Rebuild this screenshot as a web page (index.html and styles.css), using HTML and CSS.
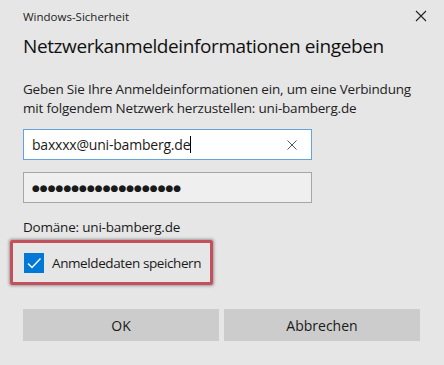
FILE: index.html
```html
<!DOCTYPE html>
<html lang="de">
<head>
    <meta charset="UTF-8">
    <title>Windows-Sicherheit</title>
    <link rel="stylesheet" href="styles.css">
</head>
<body>
    <div class="dialog">
        <div class="titlebar">
            <span class="caption">Windows-Sicherheit</span>
            <svg class="close" width="12" height="12" viewBox="0 0 12 12">
                <path d="M1 1 L11 11 M11 1 L1 11" stroke="#222" stroke-width="1.1" fill="none"/>
            </svg>
        </div>

        <h1>Netzwerkanmeldeinformationen eingeben</h1>
        <p class="intro">Geben Sie Ihre Anmeldeinformationen ein, um eine Verbindung mit folgendem Netzwerk herzustellen: uni-bamberg.de</p>

        <div class="field active">
            <span class="value">baxxxx@uni-bamberg.de</span><span class="caret"></span>
            <svg class="clear" width="10" height="10" viewBox="0 0 10 10">
                <path d="M0.5 0.5 L9.5 9.5 M9.5 0.5 L0.5 9.5" stroke="#555" stroke-width="1" fill="none"/>
            </svg>
        </div>
        <div class="field password">
            <span class="dots">&#9679;&#9679;&#9679;&#9679;&#9679;&#9679;&#9679;&#9679;&#9679;&#9679;&#9679;&#9679;&#9679;&#9679;&#9679;&#9679;&#9679;&#9679;&#9679;</span>
        </div>

        <div class="domain">Domäne: uni-bamberg.de</div>

        <div class="highlight">
            <span class="checkbox">
                <svg width="20" height="20" viewBox="0 0 20 20">
                    <path d="M4 10.5 L8 14.5 L16.5 5.5" stroke="#fff" stroke-width="1.4" fill="none"/>
                </svg>
            </span>
            <span class="check-label">Anmeldedaten speichern</span>
        </div>

        <div class="buttons">
            <button class="btn">OK</button>
            <button class="btn">Abbrechen</button>
        </div>
    </div>
</body>
</html>
```

FILE: styles.css
```css
body {
    margin: 0;
    background-color: #e6e6e6;
    font-family: 'Open Sans', 'Noto Sans', sans-serif;
    color: #1a1a1a;
}

.dialog {
    width: 444px;
    height: 365px;
    box-sizing: border-box;
    padding: 0 24px 0 23px;
}

.titlebar {
    height: 32px;
    display: flex;
    align-items: center;
    justify-content: space-between;
    margin-right: -7px;
}

.caption {
    font-size: 11.5px;
    color: #222;
}

h1 {
    font-weight: 400;
    font-size: 19px;
    letter-spacing: -0.4px;
    line-height: 28px;
    margin: 0 0 20px 0;
    color: #111;
}

.intro {
    font-size: 13.5px;
    line-height: 19px;
    margin: 0 0 11px 0;
    color: #222;
    letter-spacing: -0.2px;
}

.field {
    width: 289px;
    height: 31px;
    box-sizing: border-box;
    border: 1px solid #a6a6a6;
    background-color: #efefef;
    display: flex;
    align-items: center;
    padding: 0 8px;
    margin-bottom: 12px;
}

.field.active {
    background-color: #fff;
    border-color: #64a4dc;
}

.value {
    font-size: 14px;
    letter-spacing: -0.2px;
}

.caret {
    width: 1px;
    height: 17px;
    background-color: #000;
}

.clear {
    margin-left: auto;
    margin-right: 6px;
}

.dots {
    font-size: 9px;
    letter-spacing: 0;
    font-family: 'DejaVu Sans', sans-serif;
}

.domain {
    font-size: 13.5px;
    margin-top: 15px;
    line-height: 19px;
    letter-spacing: -0.2px;
}

.highlight {
    display: flex;
    align-items: center;
    width: 203px;
    height: 45px;
    box-sizing: border-box;
    margin: 3px 0 0 -13px;
    padding-left: 11px;
    border: 3px solid #c4505c;
    border-radius: 2px;
    box-shadow: 0 0 3px 1px rgba(0, 0, 0, 0.35);
}

.checkbox {
    width: 20px;
    height: 20px;
    flex-shrink: 0;
    background-color: #0078d7;
    display: flex;
}

.check-label {
    font-size: 13.5px;
    margin-left: 8px;
    letter-spacing: -0.4px;
    white-space: nowrap;
}

.buttons {
    display: flex;
    gap: 5px;
    margin-top: 24px;
}

.btn {
    width: 196px;
    height: 32px;
    border: none;
    background-color: #cccccc;
    font-family: 'Open Sans', 'Noto Sans', sans-serif;
    font-size: 14px;
    color: #1a1a1a;
    padding: 0;
}
```
